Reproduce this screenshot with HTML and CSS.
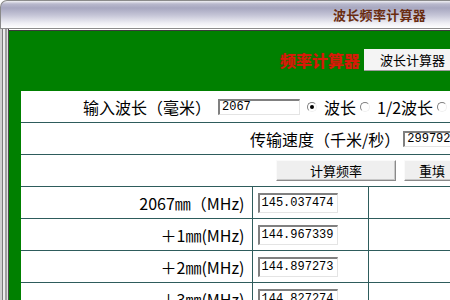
FILE: index.html
```html
<!DOCTYPE html>
<html lang="zh-CN">
<head>
  <meta charset="UTF-8">
  <title>波长频率计算器</title>
  <link rel="stylesheet" href="styles.css">
</head>
<body>
  <div class="window">
    <div class="titlebar"><span class="title">波长频率计算器</span></div>
    <div class="frame">
      <div class="panel">
        <div class="panel-head">
          <span class="brand">频率计算器</span>
          <button class="tab" type="button">波长计算器</button>
        </div>
        <table class="calc">
          <colgroup>
            <col class="c1"><col class="c2"><col class="c3">
          </colgroup>
          <tr>
            <td colspan="3" class="row-wave">
              <div class="line">
                <span>输入波长（毫米）</span>
                <input class="field field-sm w-wave" type="text" value="2067">
                <label class="opt"><span class="radio on"></span>波长</label>
                <label class="opt"><span class="radio"></span>1/2波长</label>
                <label class="opt"><span class="radio"></span>1/4波长</label>
              </div>
            </td>
          </tr>
          <tr>
            <td colspan="3" class="row-speed">
              <div class="line">
                <span>传输速度（千米/秒）</span>
                <input class="field field-sm w-speed" type="text" value="299792.458">
              </div>
            </td>
          </tr>
          <tr>
            <td colspan="3" class="row-btns">
              <div class="line">
                <button class="btn btn-calc" type="button">计算频率</button>
                <button class="btn btn-reset" type="button">重填</button>
              </div>
            </td>
          </tr>
          <tr>
            <td class="lbl">2067㎜（MHz)</td>
            <td class="val"><input class="field" type="text" value="145.037474"></td>
            <td></td>
          </tr>
          <tr>
            <td class="lbl">＋1㎜(MHz)</td>
            <td class="val"><input class="field" type="text" value="144.967339"></td>
            <td></td>
          </tr>
          <tr>
            <td class="lbl">＋2㎜(MHz)</td>
            <td class="val"><input class="field" type="text" value="144.897273"></td>
            <td></td>
          </tr>
          <tr>
            <td class="lbl">＋3㎜(MHz)</td>
            <td class="val"><input class="field" type="text" value="144.827274"></td>
            <td></td>
          </tr>
        </table>
      </div>
    </div>
  </div>
</body>
</html>
```

FILE: styles.css
```css
html, body {
  overflow: hidden;
}
body {
  margin: 0;
  background: #fff;
  font-family: "Noto Sans CJK SC", sans-serif;
  color: #000;
}
.window {
  width: 560px;
}
.titlebar {
  height: 27px;
  border-top: 1px solid #8a8a8a;
  border-left: 1px solid #8a8a8a;
  border-top-left-radius: 7px;
  background: linear-gradient(#f0f0f4 0, #b8b8cc 3px, #a7a7c0 7px, #c4c4d6 14px, #eeeef4 22px, #fff 27px);
  display: flex;
  align-items: center;
  padding-left: 332px;
}
.title {
  font-size: 13px;
  font-weight: bold;
  color: #6a2c10;
  letter-spacing: 0.3px;
}
.frame {
  border-top: 1px solid #8c8c8c;
  padding-top: 1px;
  padding-left: 9px;
  background:
    linear-gradient(to right, #cfcfcf 0 2px, #7c7c7c 2px 3px, #ececec 3px 5px, #a0a0a0 5px 7px, #e0e0e0 7px 8px, #4a4a4a 8px 9px) left top / 9px 100% no-repeat,
    #fff;
}
.panel {
  background: #008000;
  border-top: 1px solid #3a3a3a;
  padding-left: 12px;
}
.panel-head {
  height: 60px;
  box-sizing: border-box;
  padding: 18px 0 0 259px;
  display: flex;
  align-items: flex-start;
}
.panel-head > * {
  height: 22px;
}
.brand {
  font-size: 16px;
  font-weight: bold;
  line-height: 22px;
  color: #d81c08;
  text-shadow: 0 0 1px #a81000;
  margin-right: 4px;
}
.tab {
  width: 120px;
  border: 0;
  border-bottom: 1px solid #9c9c9c;
  background: #f4f4f4;
  font-family: "Noto Sans CJK SC", sans-serif;
  font-size: 13px;
  text-align: left;
  padding: 0 0 0 16px;
  color: #000;
}

/* table */
.calc {
  border-collapse: collapse;
  border-style: hidden;
  table-layout: fixed;
  width: 520px;
  background: #fff;
}
.c1 { width: 231px; }
.c2 { width: 116px; }
.calc td {
  border: 1px solid #2e5c5c;
  padding: 0;
  height: 31px;
  font-size: 16px;
  white-space: nowrap;
}
.line {
  display: flex;
  align-items: center;
}
.row-wave { padding-left: 62px !important; }
.row-speed { padding-left: 229px !important; }
.row-btns { padding-left: 255px !important; }
.lbl {
  text-align: right;
  padding-right: 7px !important;
}
.val {
  padding-left: 5px !important;
}

.field {
  box-sizing: border-box;
  width: 80px;
  height: 20px;
  border-style: solid;
  border-width: 2px 1px 1px 2px;
  border-color: #808080 #e4e4e4 #e4e4e4 #808080;
  background: #fff;
  font-family: "Liberation Mono", monospace;
  font-size: 12px;
  padding: 0 2px;
  color: #000;
  display: block;
}
.field-sm {
  height: 16px;
  font-size: 12px;
}
.w-wave {
  width: 82px;
  margin-left: 7px;
}
.w-speed {
  width: 90px;
  margin-left: 3px;
}
.opt {
  display: flex;
  align-items: center;
  margin-left: 7px;
}
.opt + .opt {
  margin-left: 4px;
}
.radio {
  width: 10px;
  height: 10px;
  box-sizing: border-box;
  border-radius: 50%;
  border: 1px solid;
  border-color: #808080 #f0f0f0 #f0f0f0 #808080;
  background: #fff;
  margin-right: 7px;
  position: relative;
}
.radio.on::after {
  content: "";
  position: absolute;
  left: 2px;
  top: 2px;
  width: 4px;
  height: 4px;
  border-radius: 50%;
  background: #000;
}
.opt:last-child .radio {
  margin-right: 10px;
}

.btn {
  height: 21px;
  border: 1px solid;
  border-color: #fafafa #8a8a8a #8a8a8a #fafafa;
  box-shadow: inset -1px -1px #c8c8c8;
  background: #efefef;
  font-family: "Noto Sans CJK SC", sans-serif;
  font-size: 13px;
  padding: 0;
  color: #000;
}
.btn-calc { width: 120px; }
.btn-reset {
  width: 56px;
  margin-left: 8px;
}
```
